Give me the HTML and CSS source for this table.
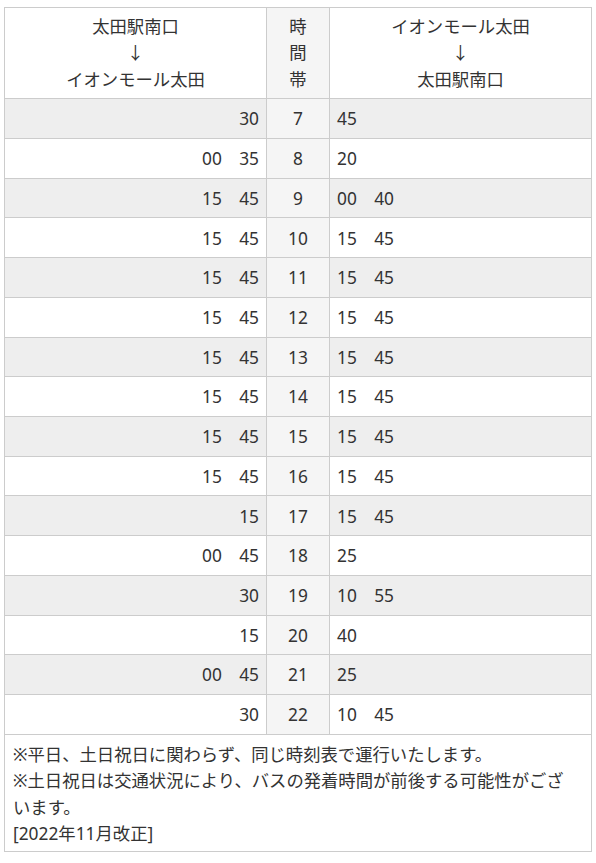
FILE: index.html
```html
<!DOCTYPE html>
<html lang="ja">
<head>
<meta charset="utf-8">
<title>時刻表</title>
<link rel="stylesheet" href="styles.css">
</head>
<body>
<div class="page">
<table class="timetable">
  <colgroup>
    <col class="c-side">
    <col class="c-hour">
    <col class="c-side">
  </colgroup>
  <thead>
    <tr>
      <th class="dir">太田駅南口<br>↓<br>イオンモール太田</th>
      <th class="hour">時<br>間<br>帯</th>
      <th class="dir">イオンモール太田<br>↓<br>太田駅南口</th>
    </tr>
  </thead>
  <tbody>
    <tr class="odd"><td class="l">30</td><td class="h">7</td><td class="r">45</td></tr>
    <tr><td class="l">00　35</td><td class="h">8</td><td class="r">20</td></tr>
    <tr class="odd"><td class="l">15　45</td><td class="h">9</td><td class="r">00　40</td></tr>
    <tr><td class="l">15　45</td><td class="h">10</td><td class="r">15　45</td></tr>
    <tr class="odd"><td class="l">15　45</td><td class="h">11</td><td class="r">15　45</td></tr>
    <tr><td class="l">15　45</td><td class="h">12</td><td class="r">15　45</td></tr>
    <tr class="odd"><td class="l">15　45</td><td class="h">13</td><td class="r">15　45</td></tr>
    <tr><td class="l">15　45</td><td class="h">14</td><td class="r">15　45</td></tr>
    <tr class="odd"><td class="l">15　45</td><td class="h">15</td><td class="r">15　45</td></tr>
    <tr><td class="l">15　45</td><td class="h">16</td><td class="r">15　45</td></tr>
    <tr class="odd"><td class="l">15</td><td class="h">17</td><td class="r">15　45</td></tr>
    <tr><td class="l">00　45</td><td class="h">18</td><td class="r">25</td></tr>
    <tr class="odd"><td class="l">30</td><td class="h">19</td><td class="r">10　55</td></tr>
    <tr><td class="l">15</td><td class="h">20</td><td class="r">40</td></tr>
    <tr class="odd"><td class="l">00　45</td><td class="h">21</td><td class="r">25</td></tr>
    <tr><td class="l">30</td><td class="h">22</td><td class="r">10　45</td></tr>
    <tr><td class="note" colspan="3">※平日、土日祝日に関わらず、同じ時刻表で運行いたします。<br>※土日祝日は交通状況により、バスの発着時間が前後する可能性がございます。<br>[2022年11月改正]</td></tr>
  </tbody>
</table>
</div>
</body>
</html>
```

FILE: styles.css
```css
html, body {
  margin: 0;
  padding: 0;
  background: #fff;
}
body {
  font-family: "Noto Sans", "Noto Sans CJK JP", sans-serif;
  font-size: 13pt;
  color: #333;
}
.page {
  padding: 7px 5px 0 4px;
}
.timetable {
  width: 588px;
  border-collapse: collapse;
  table-layout: fixed;
}
.c-side { width: 262px; }
.c-hour { width: 63px; }
.timetable th,
.timetable td {
  border: 1px solid #ccc;
  line-height: 26.4px;
  padding: 6.17px 7px;
  font-weight: normal;
  white-space: nowrap;
}
.timetable th {
  text-align: center;
  background: #fff;
  padding-top: 5px;
  padding-bottom: 6px;
}
.timetable th.hour,
.timetable td.h {
  background: #f5f5f5;
  text-align: center;
}
.timetable tr.odd td.l,
.timetable tr.odd td.r {
  background: #eee;
}
.timetable td.l { text-align: right; }
.timetable td.r { text-align: left; }
.timetable td.note {
  white-space: normal;
  text-align: left;
  padding: 6px 20px 5px 8px;
  background: #fff;
}
```
